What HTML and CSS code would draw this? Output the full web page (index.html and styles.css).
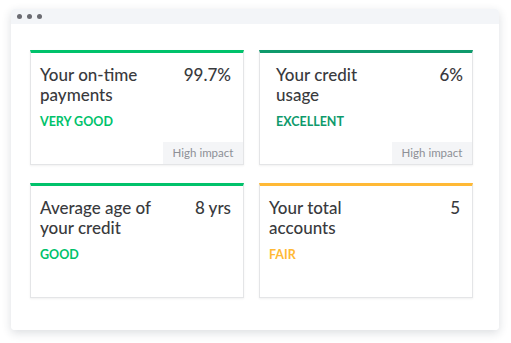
FILE: index.html
```html
<!DOCTYPE html>
<html>

<head>
    <meta name="viewport" content="width=device-width, initial-scale=1.0">
    <title>Credit factors</title>
    <link rel="stylesheet" href="styles.css">
</head>

<body>
    <div class="window">
        <div class="titlebar">
            <span class="dot"></span>
            <span class="dot"></span>
            <span class="dot"></span>
        </div>
        <div class="panel">
            <div class="card green">
                <div class="card-head">
                    <p class="title">Your on-time payments</p>
                    <p class="value">99.7%</p>
                </div>
                <p class="rating">VERY GOOD</p>
                <span class="impact">High impact</span>
            </div>
            <div class="card teal wide-pad">
                <div class="card-head">
                    <p class="title">Your credit usage</p>
                    <p class="value">6%</p>
                </div>
                <p class="rating">EXCELLENT</p>
                <span class="impact">High impact</span>
            </div>
            <div class="card green">
                <div class="card-head">
                    <p class="title">Average age of your credit</p>
                    <p class="value">8 yrs</p>
                </div>
                <p class="rating">GOOD</p>
            </div>
            <div class="card orange">
                <div class="card-head">
                    <p class="title">Your total accounts</p>
                    <p class="value">5</p>
                </div>
                <p class="rating">FAIR</p>
            </div>
        </div>
    </div>
</body>

</html>
```

FILE: styles.css
```css
body {
    margin: 0;
    padding: 9px 12px 13px 11px;
    background: #ffffff;
    font-family: Lato, "Open Sans", sans-serif;
    color: #393a3d;
}

.window {
    width: 488px;
    border-radius: 4px;
    overflow: hidden;
    box-shadow: 0 3px 10px rgba(40, 50, 70, 0.16);
}

.titlebar {
    height: 15px;
    background: #f3f5f8;
    display: flex;
    align-items: center;
    gap: 5px;
    padding-left: 6px;
}

.dot {
    width: 5px;
    height: 5px;
    border-radius: 50%;
    background: #6b6c72;
}

.panel {
    background: #ffffff;
    display: grid;
    grid-template-columns: repeat(2, 214px);
    grid-auto-rows: 115px;
    column-gap: 15px;
    row-gap: 18px;
    padding: 26px 20px 32px 19px;
}

.card {
    position: relative;
    border: 1px solid #e4e5e7;
    border-top: 3px solid #00c26b;
    box-shadow: 0 1px 2px rgba(0, 0, 0, 0.06);
    padding: 12px 12px 0 9px;
}

.wide-pad {
    padding-left: 16px;
    padding-right: 9px;
}

.card-head {
    display: flex;
    justify-content: space-between;
    align-items: flex-start;
}

.title,
.value {
    margin: 0;
    font-size: 17px;
    font-weight: 500;
    line-height: 20px;
}

.title {
    width: 126px;
}

.rating {
    margin: 9px 0 0;
    font-size: 12.5px;
    font-weight: 700;
}

.green .rating {
    color: #00c26b;
}

.teal {
    border-top-color: #0e9a6c;
}

.teal .rating {
    color: #0e9a6c;
}

.orange {
    border-top-color: #ffb935;
}

.orange .rating {
    color: #ffb935;
}

/* sits in the bottom right corner of the card */
.impact {
    position: absolute;
    right: 0;
    bottom: 0;
    width: 80px;
    height: 22px;
    line-height: 22px;
    text-align: center;
    background: #f4f5f7;
    color: #8d9096;
    font-size: 11.5px;
}
```
